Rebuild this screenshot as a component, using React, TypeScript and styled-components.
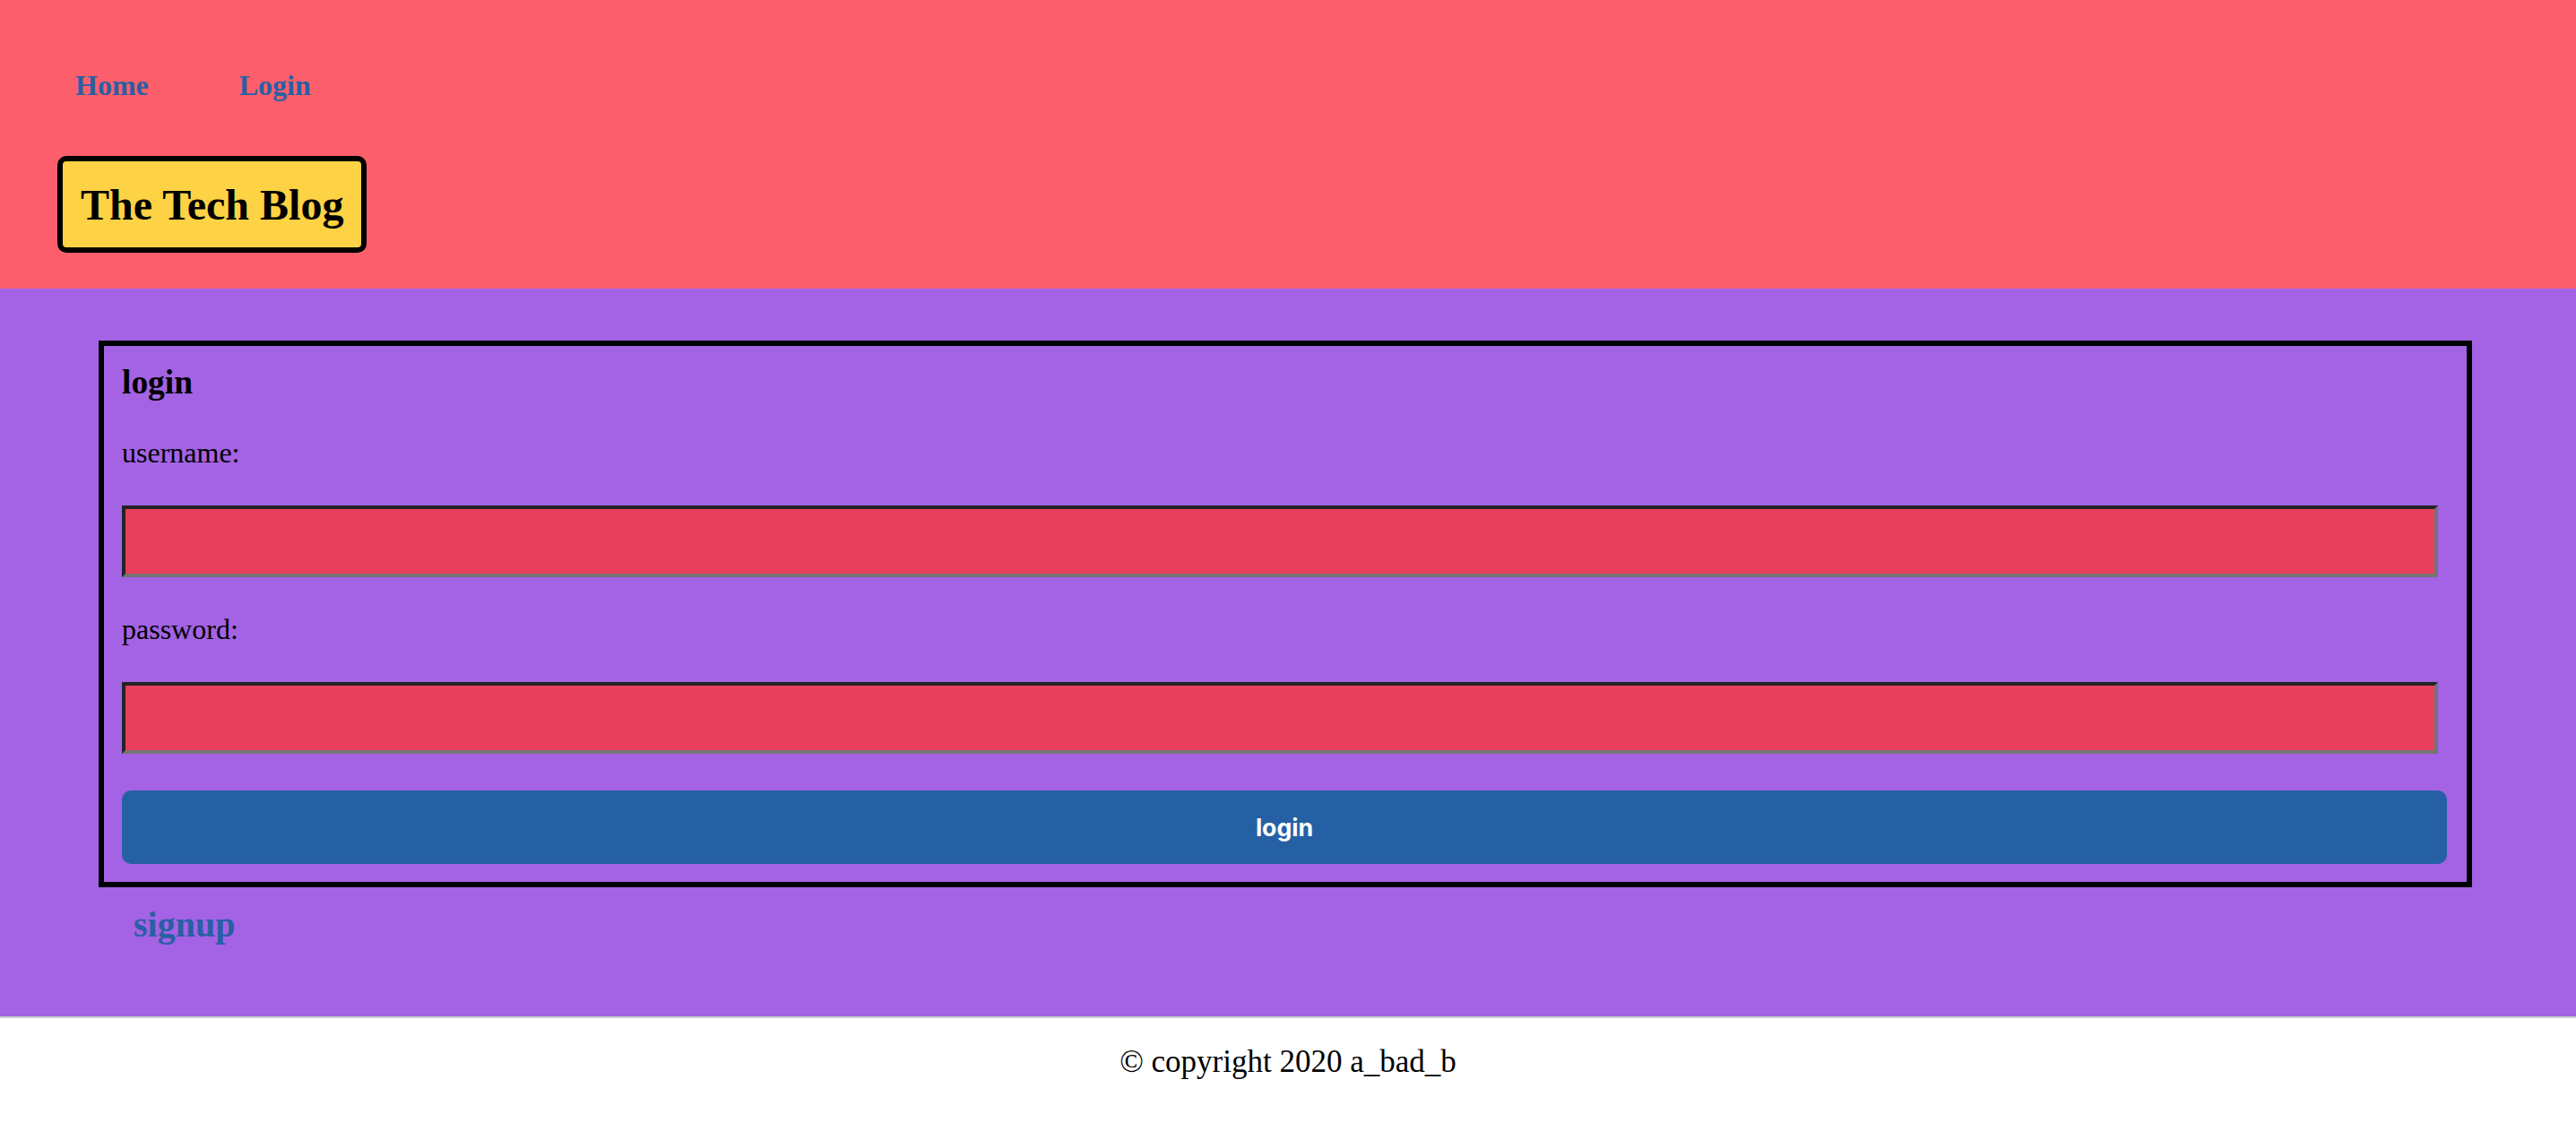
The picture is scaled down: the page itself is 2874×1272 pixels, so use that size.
import React from "react";
import styled, { createGlobalStyle } from "styled-components";

const GlobalStyle = createGlobalStyle`
  html, body {
    margin: 0;
    padding: 0;
    background: #ffffff;
  }
  body {
    font-family: "Liberation Serif", "Times New Roman", serif;
    color: #000;
  }
  * { box-sizing: border-box; }
`;

const Header = styled.header`
  background: #fc5f6b;
  padding: 78px 0 40px 0;
  display: flex;
  flex-direction: column;
  align-items: flex-start;
`;

const Nav = styled.nav`
  display: flex;
  gap: 101px;
  padding-left: 84px;
`;

const NavLink = styled.a`
  font-family: "Liberation Serif", "Times New Roman", serif;
  font-size: 32px;
  font-weight: 700;
  color: #2a5fa4;
  text-decoration: none;
  line-height: 35px;
`;

const TitleBadge = styled.h1`
  margin: 61px 0 0 64px;
  padding: 22px 20px 20px;
  background: #fdd244;
  border: 6px solid #000;
  border-radius: 10px;
  font-size: 48px;
  font-weight: 700;
  line-height: 54px;
`;

const Main = styled.main`
  background: #a363e4;
  padding: 58px 116px 80px 110px;
`;

const LoginCard = styled.form`
  border: 6px solid #000;
  padding: 20px;
  display: flex;
  flex-direction: column;
  gap: 41px;
`;

const CardTitle = styled.h3`
  margin: 0;
  font-size: 37.44px;
  font-weight: 700;
  line-height: 41px;
`;

const FieldLabel = styled.label`
  font-size: 32px;
  line-height: 35px;
`;

const TextField = styled.input`
  width: calc(100% - 12px);
  height: 80px;
  background: #e83e5e;
  border-style: solid;
  border-width: 4px;
  border-color: #232323 #747474 #747474 #232323;
  padding: 0 8px;
  font-size: 26px;
  outline: none;
`;

const SubmitButton = styled.button`
  width: calc(100% - 2px);
  height: 82px;
  border: none;
  border-radius: 10px;
  background: #2660a4;
  color: #fff;
  font-family: "Inter", "Liberation Sans", Arial, sans-serif;
  font-size: 26.67px;
  font-weight: 700;
  cursor: pointer;
`;

const SignupLink = styled.a`
  display: inline-block;
  margin: 20px 0 0 39px;
  font-size: 40px;
  font-weight: 700;
  color: #2a5fa4;
  text-decoration: none;
  line-height: 44px;
`;

const Footer = styled.footer`
  border-top: 2px solid #cccccc;
  padding: 29px 0 60px;
  text-align: center;
  font-size: 35px;
  line-height: 39px;
`;

export default function App() {
  return (
    <>
      <GlobalStyle />
      <Header>
        <Nav>
          <NavLink href="#">Home</NavLink>
          <NavLink href="#">Login</NavLink>
        </Nav>
        <TitleBadge>The Tech Blog</TitleBadge>
      </Header>
      <Main>
        <LoginCard onSubmit={(e) => e.preventDefault()}>
          <CardTitle>login</CardTitle>
          <FieldLabel htmlFor="username">username:</FieldLabel>
          <TextField id="username" type="text" />
          <FieldLabel htmlFor="password">password:</FieldLabel>
          <TextField id="password" type="password" />
          <SubmitButton type="submit">login</SubmitButton>
        </LoginCard>
        <SignupLink href="#">signup</SignupLink>
      </Main>
      <Footer>© copyright 2020 a_bad_b</Footer>
    </>
  );
}
